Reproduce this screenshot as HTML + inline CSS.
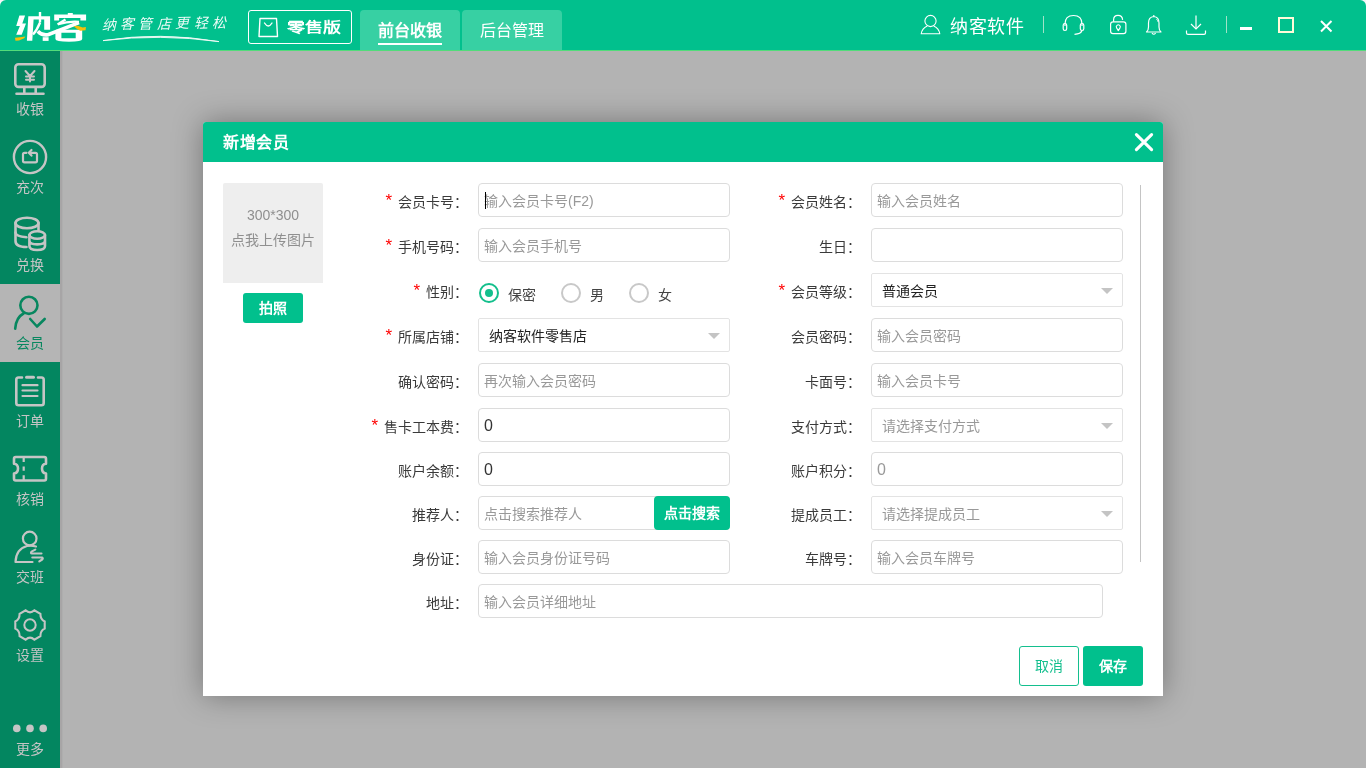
<!DOCTYPE html>
<html lang="zh-CN">
<head>
<meta charset="utf-8">
<style>
*{margin:0;padding:0;box-sizing:border-box}
html,body{width:1366px;height:768px;overflow:hidden;background:#b3b3b3;font-family:"Liberation Sans",sans-serif;}
.abs{position:absolute}
#hdr{position:absolute;left:0;top:0;width:1366px;height:50px;background:#01c08d;border-radius:6px 6px 0 0}
#cl,#cr{position:absolute;top:0;width:6px;height:6px;background:#f6f6f8}#cl{left:0}#cr{right:0}
#hline{position:absolute;left:0;top:50px;width:1366px;height:1px;background:#52dc7a}
#side{position:absolute;left:0;top:51px;width:60px;height:717px;background:#038660}
#sideb{position:absolute;left:60px;top:51px;width:3px;height:717px;background:linear-gradient(90deg,#a7a5a6 0,#a7a5a6 2px,#aeaeae 2px)}
.si{position:absolute;left:0;width:60px;height:18px;text-align:center;font-size:14px;color:#c5c5c5;line-height:18px}
.si svg{position:absolute;left:0;top:0}
.si .t{position:absolute;left:0;width:60px;text-align:center;font-size:14px;color:#c5c5c5;line-height:16px}
#dlg{position:absolute;left:203px;top:122px;width:960px;height:574px;background:#fff;border-radius:3px 3px 0 0;box-shadow:0 0 30px rgba(0,0,0,0.35)}
#dh{position:absolute;left:0;top:0;width:960px;height:40px;background:#01c08d;border-radius:3px 3px 0 0}
#dh .tt{position:absolute;left:19px;top:9px;font-size:16px;font-weight:bold;color:#fff;line-height:22px}
.lb{position:absolute;font-size:14px;color:#3a3a3a;line-height:20px;text-align:right;white-space:nowrap}
.lb i{font-style:normal;color:#f00;margin-right:6px;font-size:17px;line-height:0;position:relative;top:-1px}
.ip{position:absolute;width:252px;height:34px;border:1px solid #dcdcdc;border-radius:4px;background:#fff;font-size:14px;line-height:34px;padding-left:5px;color:#999;white-space:nowrap;overflow:hidden}
.ip.v{color:#333}
.dg{font-size:16px}
.sel{position:absolute;width:252px;height:34px;border:1px solid #e3e3e3;border-radius:2px;background:#fff;font-size:14px;line-height:34px;padding-left:10px;color:#222;white-space:nowrap}
.sel.ph{color:#999}
.sel:after{content:"";position:absolute;right:9px;top:14px;border-left:6px solid transparent;border-right:6px solid transparent;border-top:6px solid #c4c4c4}
.rd{position:absolute;width:20px;height:20px;border:2px solid #c8c8c8;border-radius:50%}
.rd.on{border-color:#13bf8c}
.rd.on:after{content:"";position:absolute;left:4px;top:4px;width:8px;height:8px;border-radius:50%;background:#13bf8c}
.rt{position:absolute;font-size:14px;color:#444;line-height:20px}
.btn{position:absolute;background:#01c08d;color:#fff;font-size:14px;font-weight:bold;text-align:center;border-radius:3px}
</style>
</head>
<body>
<div id="root" style="position:absolute;left:0;top:0;width:1366px;height:768px;will-change:transform">
<div id="cl"></div><div id="cr"></div>
<div id="hdr">
<svg class="abs" style="left:0;top:0" width="240" height="50" viewBox="0 0 240 50">
  <g fill="#fff">
    <polygon points="19.4,15.4 25.1,15.4 22.3,23.6 26,23.6 21.7,34.7 16.2,34.7 19.9,25.9 16.2,25.9"/>
    <polygon points="28.3,16.2 50.1,16.2 50.1,29.8 44.2,29.8 44.2,19.6 33.6,19.6 32.3,40.7 26.9,40.7"/>
    <rect x="38.8" y="12" width="2.4" height="10"/>
    <rect x="42.7" y="37.2" width="5.9" height="3.7"/>
    <rect x="67.8" y="13" width="5" height="2"/>
    <polygon points="54.2,14.4 86.1,14.4 86.1,20.4 80.4,20.4 80.4,17.9 59.1,17.9 59.1,20.4 54.2,20.4"/>
    <path d="M55.4 30.5 Q55.4 29.8 56.5 29.8 L82.2 29.8 L82.2 39 Q82.2 41.8 69 41.8 Q55.4 41.8 55.4 39 Z M61.4 32.8 V38.2 H75.7 V32.8 Z" fill-rule="evenodd"/>
  </g>
  <g fill="none" stroke="#fff" stroke-linecap="butt">
    <path d="M40.2 22.2 Q37 30 33 34.5" stroke-width="2.4"/>
    <path d="M37.8 31.2 Q42 35.8 48 34.7 L79 22.6" stroke-width="3.6"/>
    <path d="M57.6 24.6 L65.5 19.6" stroke-width="2.4"/>
    <path d="M58.2 24.3 Q68 21 79 21.8" stroke-width="2.2"/>
  </g>
  <polygon fill="#f5bf0a" points="15,37.8 22,36.9 25.4,36.6 24.2,38.3 19,40.4 15.5,40.8"/>
  <polygon fill="#f5bf0a" points="73.7,26.3 77.7,25.8 82.7,27.6 85.9,27.1 85.6,30.3 80.2,30.8 76.7,28.8"/>
  <text x="101.5" y="28.5" font-size="14" fill="#fff" fill-opacity="0.92" font-family="Liberation Serif, serif" font-style="italic" letter-spacing="4.4" transform="rotate(-1 160 24)">纳客管店更轻松</text>
  <path d="M103 40.6 Q160 31.5 219 41.6 Q160 33.6 103 40.6 Z" fill="#f0fbf6" stroke="#f0fbf6" stroke-width="0.9" stroke-linejoin="round"/>
</svg>
<div class="abs" style="left:248px;top:10px;width:104px;height:34px;border:1px solid #fff;border-radius:3px"></div>
<svg class="abs" style="left:256px;top:15px" width="26" height="24" viewBox="0 0 26 24">
  <path d="M4 3.5 H20.5 L21.5 21.5 H3 Z" stroke="#fff" stroke-width="1.4" fill="none" stroke-linejoin="round"/>
  <path d="M8.5 8 Q12.3 14 16 8" stroke="#fff" stroke-width="1.4" fill="none" stroke-linecap="round"/>
</svg>
<div class="abs" style="left:287px;top:16px;font-size:18px;font-weight:bold;color:#fff;line-height:22px;letter-spacing:-0.1px;transform:scaleY(0.76);transform-origin:50% 50%">零售版</div>
<div class="abs" style="left:360px;top:10px;width:100px;height:40px;background:#37d0a3;border-radius:4px 4px 0 0"></div>
<div class="abs" style="left:378px;top:21px;font-size:16px;font-weight:bold;color:#fff;line-height:20px">前台收银</div>
<div class="abs" style="left:378px;top:43px;width:64px;height:2px;background:#fff"></div>
<div class="abs" style="left:462px;top:10px;width:100px;height:40px;background:#37d0a3;border-radius:4px 4px 0 0"></div>
<div class="abs" style="left:480px;top:21px;font-size:16px;color:#fff;line-height:20px">后台管理</div>

<svg class="abs" style="left:918px;top:12px" width="26" height="26" viewBox="0 0 26 26">
  <circle cx="12.5" cy="9" r="5.6" stroke="#fff" stroke-width="1.1" fill="none"/>
  <path d="M9.3 14 Q4 16.5 3.2 21.8 H21.8 Q21 16.5 15.7 14" stroke="#fff" stroke-width="1.1" fill="none" stroke-linejoin="round"/>
</svg>
<div class="abs" style="left:950px;top:15.5px;font-size:18px;color:#fff;line-height:22px;letter-spacing:0.5px">纳客软件</div>
<div class="abs" style="left:1043px;top:16px;width:1px;height:17px;background:#9fe3c8"></div>
<svg class="abs" style="left:1060px;top:12px" width="26" height="26" viewBox="0 0 26 26">
  <path d="M5 14 V12 Q5 3.5 13.5 3.5 Q22 3.5 22 12 V14" stroke="#fff" stroke-width="1.2" fill="none"/>
  <rect x="3.2" y="11.5" width="3.5" height="7" rx="1.7" stroke="#fff" stroke-width="1.2" fill="none"/>
  <rect x="20.3" y="11.5" width="3.5" height="7" rx="1.7" stroke="#fff" stroke-width="1.2" fill="none"/>
  <path d="M22 18.5 Q21 22 14.5 22.3" stroke="#fff" stroke-width="1.2" fill="none"/>
</svg>
<svg class="abs" style="left:1106px;top:12px" width="24" height="26" viewBox="0 0 24 26">
  <path d="M7.6 9.8 V7.8 Q7.6 3.4 12 3.4 Q16.4 3.4 16.6 7.9" stroke="#fff" stroke-width="1.2" fill="none"/>
  <rect x="4.6" y="9.8" width="15.3" height="11.9" rx="2.4" stroke="#fff" stroke-width="1.2" fill="none"/>
  <path d="M12.3 18.6 L10.6 15.9 A2 2 0 1 1 14 15.9 Z" stroke="#fff" stroke-width="1.1" fill="none" stroke-linejoin="round"/>
</svg>
<svg class="abs" style="left:1142px;top:12px" width="24" height="26" viewBox="0 0 24 26">
  <path d="M4.5 20 Q6.5 18.5 6.5 15 V11 Q6.5 5 11.8 4.5 Q17 5 17 11 V15 Q17 18.5 19 20 Z" stroke="#fff" stroke-width="1.2" fill="none" stroke-linejoin="round"/>
  <path d="M10 21 Q11.8 23.5 13.6 21" stroke="#fff" stroke-width="1.2" fill="none"/>
  <path d="M11.8 3 V4.5" stroke="#fff" stroke-width="1.2"/>
  <path d="M14.5 7.2 Q15.8 8.2 16 9.8" stroke="#fff" stroke-width="1" fill="none"/>
</svg>
<svg class="abs" style="left:1183px;top:12px" width="26" height="26" viewBox="0 0 26 26">
  <path d="M13 3.5 V17" stroke="#fff" stroke-width="1.2"/>
  <path d="M8 12 L13 17 L18 12" stroke="#fff" stroke-width="1.2" fill="none"/>
  <path d="M3.5 18.5 V21 Q3.5 22.3 5 22.3 H21 Q22.5 22.3 22.5 21 V18.5" stroke="#fff" stroke-width="1.2" fill="none"/>
</svg>
<div class="abs" style="left:1226px;top:16px;width:1px;height:17px;background:#9fe3c8"></div>
<div class="abs" style="left:1240px;top:27px;width:12px;height:2.5px;background:#fff"></div>
<div class="abs" style="left:1278px;top:17px;width:16px;height:16px;border:2px solid #fffbd9"></div>
<svg class="abs" style="left:1318px;top:18px" width="16" height="16" viewBox="0 0 16 16">
  <path d="M3 3 L13.5 13.5 M13.5 3 L3 13.5" stroke="#fff" stroke-width="2"/>
</svg>
</div>
<div id="hline"></div>
<div id="side">
<div class="abs" style="left:0;top:233px;width:60px;height:78px;background:#b5b5b5"></div>
</div>
<svg class="abs" style="left:0;top:0" width="60" height="768" viewBox="0 0 60 768">
 <g fill="none" stroke="#c5c5c5" stroke-width="2.6" stroke-linecap="round" stroke-linejoin="round">
  <!-- monitor -->
  <rect x="15.3" y="64.3" width="29.4" height="22.6" rx="3.2"/>
  <path d="M24.3 87.5 V93.8 M35.7 87.5 V93.8 M16.5 93.8 H43.5"/>
  <path d="M25.5 71 L30 76 L34.5 71 M30 76 V81.5 M26 76.5 H34 M26 79.8 H34" stroke-width="2"/>
  <!-- circle recharge -->
  <circle cx="30" cy="157" r="16.1" stroke-width="2.4"/>
  <path d="M26.5 152.8 H24.5 Q23 152.8 23 154.3 V160.8 Q23 162.3 24.5 162.3 H35.5 Q37 162.3 37 160.8 V154.3 Q37 152.8 35.5 152.8 H29.5" stroke-width="2.2"/>
  <path d="M31.5 150 L28.8 152.8 L31.5 155.6" stroke-width="2.2"/>
  <!-- coins -->
  <path d="M15.5 223 V241 Q15.5 247 26.5 247" />
  <ellipse cx="27" cy="223" rx="11.5" ry="5.3"/>
  <path d="M15.5 232.5 Q15.5 236.5 26.5 237.2"/>
  <path d="M38.5 223 V230"/>
  <ellipse cx="37.2" cy="235" rx="7.8" ry="3.8"/>
  <path d="M29.4 235 V246 Q29.4 250 37.2 250 Q45 250 45 246 V235 M29.4 240.8 Q29.4 244.4 37.2 244.4 Q45 244.4 45 240.8"/>
  <!-- clipboard -->
  <path d="M22 377.5 H18.5 Q16.3 377.5 16.3 379.7 V403 Q16.3 405.2 18.5 405.2 H41.5 Q43.7 405.2 43.7 403 V379.7 Q43.7 377.5 41.5 377.5 H38"/>
  <path d="M26.5 377.3 H33.5" stroke-width="3"/>
  <path d="M22.5 385.2 H37.5 M22.5 390.5 H37.5 M22.5 396 H37.5" stroke-width="2.2"/>
  <!-- ticket -->
  <path d="M15.7 457 H44.3 Q46 457 46 458.7 V463.7 Q42 464 42 468.6 Q42 473.2 46 473.5 V478.5 Q46 480.5 44.3 480.5 H15.7 Q14 480.5 14 478.5 V473.5 Q18 473.2 18 468.6 Q18 464 14 463.7 V458.7 Q14 457 15.7 457 Z"/>
  <path d="M23.7 457.5 V462 M23.7 466.5 V470.8 M23.7 475.3 V480" stroke-width="2.2" stroke-linecap="butt"/>
  <!-- shift person -->
  <circle cx="29.7" cy="538.5" r="6.8" stroke-width="2.2"/>
  <path d="M36 546.5 Q31 545 27 546 Q16 549 15.5 562 H32.5" stroke-width="2.2"/>
  <path d="M35.3 549.6 L31.5 551.6 Q30.2 553.3 32 553.5 H41.5 M32.3 557.5 H42 Q43.5 558.2 42.2 559.5 L39.3 561.4" stroke-width="2.1"/>
  <!-- gear -->
  <circle cx="30" cy="625" r="5.7" stroke-width="2"/>
  <path d="M25.6 610.3 Q30 614.3 34.4 610.3 L40.4 613.8 Q40.3 619.5 44.7 621.5 L44.7 628.6 Q40.3 630.5 40.4 636.2 L34.4 639.7 Q30 635.7 25.6 639.7 L19.6 636.2 Q19.7 630.5 15.3 628.6 L15.3 621.5 Q19.7 619.5 19.6 613.8 Z" stroke-width="2.1" stroke-linejoin="miter"/>
 </g>
 <g fill="none" stroke="#07875f" stroke-width="2.6" stroke-linecap="round" stroke-linejoin="round">
  <circle cx="28.9" cy="305.3" r="8.6"/>
  <path d="M23.5 313.5 Q16 317.5 15.2 328.6"/>
  <path d="M30.2 319 L37 326.5 L44.7 319"/>
 </g>
 <g fill="#c5c5c5"><circle cx="16.8" cy="728.4" r="3.8"/><circle cx="30" cy="728.4" r="3.8"/><circle cx="43.2" cy="728.4" r="3.8"/></g>
</svg>
<div class="si t2" style="top:100px">收银</div>
<div class="si t2" style="top:178px">充次</div>
<div class="si t2" style="top:256px">兑换</div>
<div class="si t2" style="top:334px;color:#07875f">会员</div>
<div class="si t2" style="top:412px">订单</div>
<div class="si t2" style="top:490px">核销</div>
<div class="si t2" style="top:568px">交班</div>
<div class="si t2" style="top:646px">设置</div>
<div class="si t2" style="top:740px">更多</div>
<div id="sideb"></div>

<div id="dlg">
  <div id="dh"><div class="tt" style="top:10px;left:20px;letter-spacing:0.6px">新增会员</div>
<svg class="abs" style="left:928px;top:8px" width="24" height="24" viewBox="0 0 24 24"><path d="M5.4 4.6 L20.6 19.6 M20.6 4.6 L5.4 19.6" stroke="#fff" stroke-width="3.1" stroke-linecap="round"/></svg>
  </div>
</div>
<div id="form">
<div class="lb" style="left:268px;top:192px;width:200px"><i>*</i>会员卡号：</div><div class="ip" style="left:478px;top:183px">输入会员卡号(F2)</div>
<div class="lb" style="left:268px;top:237px;width:200px"><i>*</i>手机号码：</div><div class="ip" style="left:478px;top:228px">输入会员手机号</div>
<div class="lb" style="left:268px;top:282px;width:200px"><i>*</i>性别：</div><div class="rd on" style="left:479px;top:283px"></div><div class="rt" style="left:508px;top:285px">保密</div><div class="rd" style="left:561px;top:283px"></div><div class="rt" style="left:590px;top:285px">男</div><div class="rd" style="left:629px;top:283px"></div><div class="rt" style="left:658px;top:285px">女</div>
<div class="lb" style="left:268px;top:327px;width:200px"><i>*</i>所属店铺：</div><div class="sel" style="left:478px;top:318px">纳客软件零售店</div>
<div class="lb" style="left:268px;top:372px;width:200px">确认密码：</div><div class="ip" style="left:478px;top:363px">再次输入会员密码</div>
<div class="lb" style="left:268px;top:417px;width:200px"><i>*</i>售卡工本费：</div><div class="ip v" style="left:478px;top:408px"><span class="dg">0</span></div>
<div class="lb" style="left:268px;top:461px;width:200px">账户余额：</div><div class="ip v" style="left:478px;top:452px"><span class="dg">0</span></div>
<div class="lb" style="left:268px;top:505px;width:200px">推荐人：</div><div class="ip" style="left:478px;top:496px">点击搜索推荐人</div><div class="btn" style="left:654px;top:496px;width:76px;height:34px;line-height:35px;border-radius:4px">点击搜索</div>
<div class="lb" style="left:268px;top:549px;width:200px">身份证：</div><div class="ip" style="left:478px;top:540px">输入会员身份证号码</div>
<div class="lb" style="left:268px;top:593px;width:200px">地址：</div><div class="ip" style="left:478px;top:584px;width:625px">输入会员详细地址</div>
<div class="lb" style="left:661px;top:192px;width:200px"><i>*</i>会员姓名：</div><div class="ip" style="left:871px;top:183px">输入会员姓名</div>
<div class="lb" style="left:661px;top:237px;width:200px">生日：</div><div class="ip" style="left:871px;top:228px"></div>
<div class="lb" style="left:661px;top:282px;width:200px"><i>*</i>会员等级：</div><div class="sel" style="left:871px;top:273px">普通会员</div>
<div class="lb" style="left:661px;top:327px;width:200px">会员密码：</div><div class="ip" style="left:871px;top:318px">输入会员密码</div>
<div class="lb" style="left:661px;top:372px;width:200px">卡面号：</div><div class="ip" style="left:871px;top:363px">输入会员卡号</div>
<div class="lb" style="left:661px;top:417px;width:200px">支付方式：</div><div class="sel ph" style="left:871px;top:408px">请选择支付方式</div>
<div class="lb" style="left:661px;top:461px;width:200px">账户积分：</div><div class="ip" style="left:871px;top:452px"><span class="dg">0</span></div>
<div class="lb" style="left:661px;top:505px;width:200px">提成员工：</div><div class="sel ph" style="left:871px;top:496px">请选择提成员工</div>
<div class="lb" style="left:661px;top:549px;width:200px">车牌号：</div><div class="ip" style="left:871px;top:540px">输入会员车牌号</div>
<div class="abs" style="left:223px;top:183px;width:100px;height:100px;background:#eeeeee;border-radius:2px 2px 0 0;color:#8f8f8f;font-size:14px;text-align:center">
<div style="position:absolute;left:0;top:22px;width:100px;line-height:20px">300*300</div>
<div style="position:absolute;left:0;top:47px;width:100px;line-height:20px">点我上传图片</div></div>
<div class="btn" style="left:243px;top:293px;width:60px;height:30px;line-height:30px">拍照</div>
<div class="abs" style="left:1140px;top:185px;width:1px;height:377px;background:#c4c4c4"></div>
<div class="abs" style="left:485px;top:192px;width:1px;height:17px;background:#000"></div>
<div class="btn" style="left:1019px;top:646px;width:60px;height:40px;line-height:38px;background:#fff;border:1px solid #14bf8e;color:#14bf8e;font-weight:normal">取消</div>
<div class="btn" style="left:1083px;top:646px;width:60px;height:40px;line-height:40px">保存</div>
</div>
</div>
</body>
</html>
